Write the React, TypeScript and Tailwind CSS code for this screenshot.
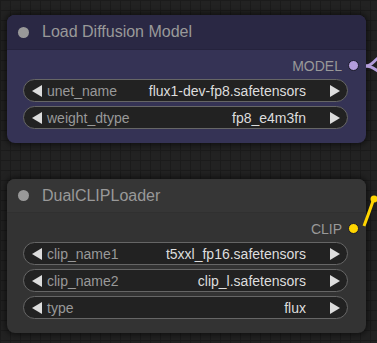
import React from 'react';

type Widget = { name: string; value: string };

const font = { fontFamily: '"Liberation Sans", Arial, sans-serif' };

const ArrowLeft = () => (
  <svg width="10" height="12" viewBox="0 0 10 12" className="shrink-0">
    <polygon points="10,0 10,12 0,6" fill="#dddddd" />
  </svg>
);

const ArrowRight = () => (
  <svg width="10" height="12" viewBox="0 0 10 12" className="shrink-0">
    <polygon points="0,0 0,12 10,6" fill="#dddddd" />
  </svg>
);

const ComboWidget: React.FC<Widget> = ({ name, value }) => (
  <div className="h-[23px] rounded-full border border-[#666] bg-[#222] flex items-center pl-[8px] pr-[7px] text-[14px] leading-none">
    <ArrowLeft />
    <span className="ml-[5px] text-[#999]">{name}</span>
    <span className="ml-auto text-[#ddd]">{value}</span>
    <span className="ml-[24px]">
      <ArrowRight />
    </span>
  </div>
);

const Node: React.FC<{
  title: string;
  output: string;
  dot: string;
  titleBg: string;
  bodyBg: string;
  widgets: Widget[];
  titleH: string;
}> = ({ title, output, dot, titleBg, bodyBg, widgets, titleH }) => (
  <div className={`w-[359px] ml-[7px] rounded-[8px] overflow-hidden shadow-[0_0_6px_2px_rgba(0,0,0,0.55)] ${bodyBg}`}>
    <div className={`${titleH} ${titleBg} flex items-center pl-[11px] border-b border-black/10`}>
      <div className="w-[11px] h-[11px] rounded-full bg-[#999]" />
      <span className="ml-[13px] text-[16px] text-[#999]">{title}</span>
    </div>
    <div className="pt-[3px] h-[28px] flex items-center justify-end pr-[7px]">
      <span className="text-[14px] text-[#999] leading-none">{output}</span>
      <div className={`ml-[6px] w-[11px] h-[11px] rounded-full border border-[#1a1a2a] ${dot}`} />
    </div>
    <div className="flex flex-col gap-[4px] pl-[16px] pr-[18px] pb-[14px] pt-[1px]">
      {widgets.map((w) => (
        <ComboWidget key={w.name} {...w} />
      ))}
    </div>
  </div>
);

export default function App() {
  return (
    <div
      className="relative w-[377px] h-[343px] overflow-hidden bg-[#222222] bg-[linear-gradient(#1b1b1b_1px,transparent_1px),linear-gradient(90deg,#1b1b1b_1px,transparent_1px)] bg-[size:10px_10px] pt-[15px]"
      style={font}
    >
      <Node
        title="Load Diffusion Model"
        output="MODEL"
        dot="bg-[#b39ddb]"
        titleBg="bg-[#2a2844]"
        bodyBg="bg-[#353355]"
        titleH="h-[35px]"
        widgets={[
          { name: 'unet_name', value: 'flux1-dev-fp8.safetensors' },
          { name: 'weight_dtype', value: 'fp8_e4m3fn' },
        ]}
      />
      <div className="h-[36px]" />
      <Node
        title="DualCLIPLoader"
        output="CLIP"
        dot="bg-[#ffd500]"
        titleBg="bg-[#363636]"
        bodyBg="bg-[#333333]"
        titleH="h-[34px]"
        widgets={[
          { name: 'clip_name1', value: 't5xxl_fp16.safetensors' },
          { name: 'clip_name2', value: 'clip_l.safetensors' },
          { name: 'type', value: 'flux' },
        ]}
      />
      <svg className="absolute left-0 top-0 pointer-events-none" width="377" height="343">
        <path d="M366 66 C371 66 373 62 378 58" stroke="#b39ddb" strokeWidth="3" fill="none" />
        <path d="M366 66 C371 66 373 68 378 71" stroke="#b39ddb" strokeWidth="3" fill="none" />
        <path d="M364 226 C367 218 370 210 373 201" stroke="#ffd500" strokeWidth="3" fill="none" />
        <circle cx="374" cy="199" r="3.5" fill="#ffd500" />
      </svg>
    </div>
  );
}
